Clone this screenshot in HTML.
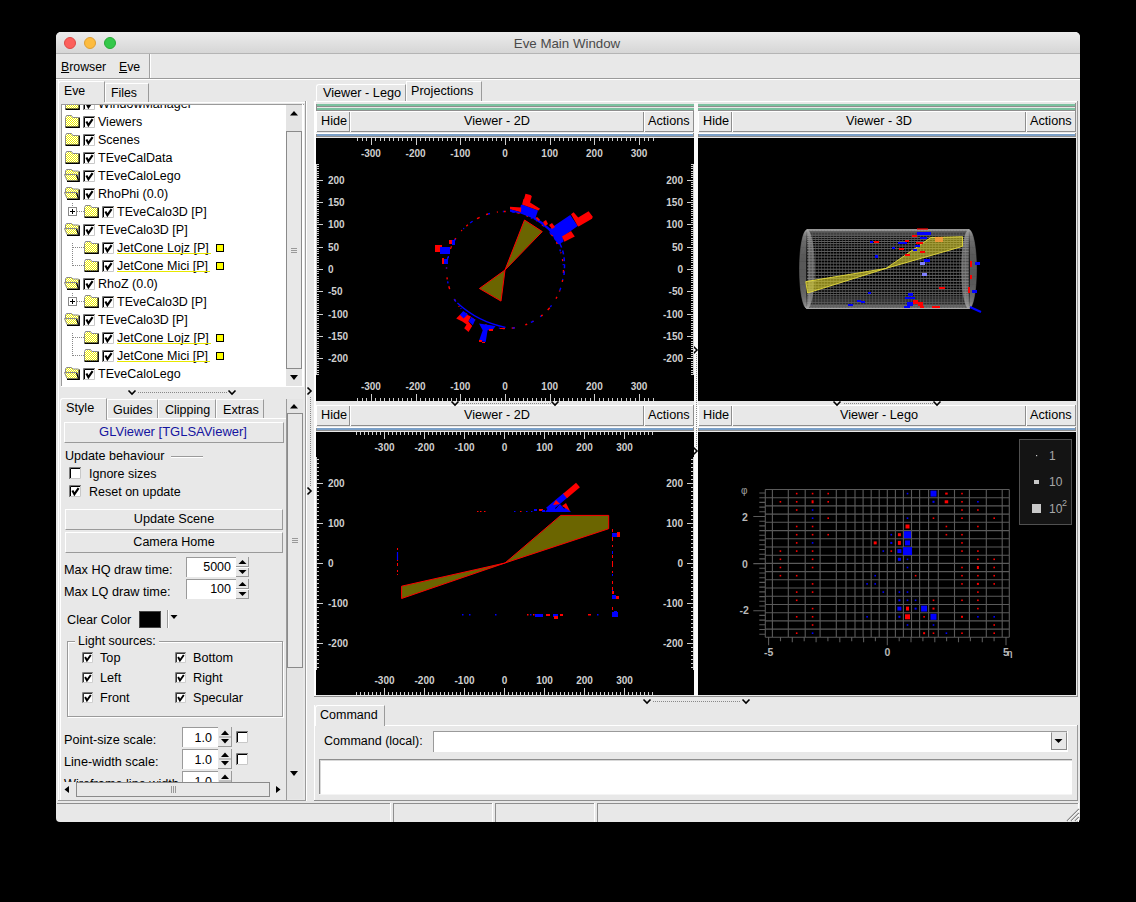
<!DOCTYPE html><html><head><meta charset="utf-8"><style>
html,body{margin:0;padding:0;background:#000;width:1136px;height:902px;overflow:hidden}
.a{position:absolute}
.t{font-family:"Liberation Sans",sans-serif;white-space:pre}
svg{position:absolute}
</style></head><body>
<div class="a" style="left:56px;top:32px;width:1024px;height:790px;background:#e8e8e8;border-radius:5px 5px 4px 4px"></div>
<div class="a" style="left:56px;top:32px;width:1024px;height:21px;background:linear-gradient(#ececec,#d6d6d6);border-radius:5px 5px 0 0"></div>
<div class="a" style="left:56px;top:53px;width:1024px;height:1px;background:#b4b4b4"></div>
<div class="a" style="left:64px;top:37px;width:12px;height:12px;background:#fc605c;border-radius:50%;box-sizing:border-box;border:0.5px solid #de4a46"></div>
<div class="a" style="left:84px;top:37px;width:12px;height:12px;background:#fdbc40;border-radius:50%;box-sizing:border-box;border:0.5px solid #de9f34"></div>
<div class="a" style="left:104px;top:37px;width:12px;height:12px;background:#34c84a;border-radius:50%;box-sizing:border-box;border:0.5px solid #27aa35"></div>
<div class="a t" style="left:367px;width:400px;text-align:center;top:36px;font-size:13.3px;line-height:16px;color:#4a4a4a;">Eve Main Window</div>
<div class="a t" style="left:61px;top:60px;font-size:12.3px;line-height:15px;color:#000;"><u>B</u>rowser</div>
<div class="a t" style="left:119px;top:60px;font-size:12.3px;line-height:15px;color:#000;"><u>E</u>ve</div>
<div class="a" style="left:149px;top:54px;width:1px;height:24px;background:#a0a0a0"></div>
<div class="a" style="left:150px;top:54px;width:1px;height:24px;background:#ffffff"></div>
<div class="a" style="left:56px;top:78px;width:1024px;height:1px;background:#9a9a9a"></div>
<div class="a" style="left:56px;top:79px;width:1024px;height:1px;background:#ffffff"></div>
<div class="a" style="left:58px;top:80px;width:1px;height:721px;background:#ffffff"></div>
<div class="a" style="left:305px;top:101px;width:1px;height:700px;background:#9a9a9a"></div>
<div class="a" style="left:306px;top:101px;width:1px;height:700px;background:#ffffff"></div>
<div class="a" style="left:58px;top:800px;width:248px;height:1px;background:#9a9a9a"></div>
<div class="a" style="left:58px;top:81px;width:47px;height:21px;background:#e8e8e8;border-top:1px solid #ffffff;border-left:1px solid #ffffff;border-right:1px solid #9a9a9a;box-sizing:border-box;border-radius:3px 0 0 0"></div>
<div class="a" style="left:105px;top:83px;width:44px;height:19px;background:#e8e8e8;border-top:1px solid #ffffff;border-left:1px solid #ffffff;border-right:1px solid #9a9a9a;box-sizing:border-box"></div>
<div class="a t" style="left:64px;top:84px;font-size:12.3px;line-height:15px;color:#000;">Eve</div>
<div class="a t" style="left:111px;top:86px;font-size:12.3px;line-height:15px;color:#000;">Files</div>
<div class="a" style="left:105px;top:102px;width:200px;height:1px;background:#ffffff"></div>
<div class="a" style="left:61px;top:104px;width:243px;height:283px;background:#fff;border-top:1px solid #9a9a9a;border-left:1px solid #9a9a9a;box-sizing:border-box"></div>
<svg width="0" height="0" style="position:absolute"><defs>
<pattern id="chk" width="2" height="2" patternUnits="userSpaceOnUse"><rect width="2" height="2" fill="#fff"/><rect width="1" height="1" fill="#f0f000"/><rect x="1" y="1" width="1" height="1" fill="#f0f000"/></pattern>
<symbol id="fc" viewBox="0 0 16 13"><path d="M1 12 V2.5 L2 0.5 H6.5 L8 2.5 H14 V12 Z" fill="url(#chk)"/><path d="M0.5 12 V2.5 L1.5 0.5 H6.5 L7.8 2.5 H13.5" stroke="#8a8a8a" fill="none"/><path d="M14.2 2.5 V12.2 H0.5" stroke="#000" stroke-width="1.4" fill="none"/></symbol>
<symbol id="fo" viewBox="0 0 16 13"><path d="M2 6 V2 L3 0.5 H7.5 L9 2 H14.5 V6 Z" fill="url(#chk)"/><path d="M1.5 6 V2 L2.5 0.5 H7.5 L9 2 H14.5" stroke="#8a8a8a" fill="none"/><path d="M0.5 6 H12.5 L14.5 11.5 H3 Z" fill="url(#chk)"/><path d="M0.5 5.5 H12.5" stroke="#8a8a8a" stroke-width="1.2"/><path d="M0.5 5.5 L3 11.5" stroke="#8a8a8a"/><path d="M12.5 5.8 L14.5 11.5" stroke="#000" stroke-width="1.3"/><path d="M15.2 2.5 V12.2 H3" stroke="#000" stroke-width="1.4" fill="none"/></symbol>
<symbol id="cb" viewBox="0 0 12 12"><rect x="0" y="0" width="12" height="12" fill="#fff"/><path d="M0.5 12 V0.5 H12" stroke="#7a7a7a" fill="none"/><path d="M1.5 11 V1.5 H11" stroke="#000" fill="none"/><path d="M11.5 1 V11.5 H1" stroke="#c8c8c8" fill="none"/><path d="M3.4 5.4 L5.4 9.2 L9.6 3.2" stroke="#000" stroke-width="2.1" fill="none"/></symbol>
<symbol id="cbe" viewBox="0 0 12 12"><rect x="0" y="0" width="12" height="12" fill="#fff"/><path d="M0.5 12 V0.5 H12" stroke="#7a7a7a" fill="none"/><path d="M1.5 11 V1.5 H11" stroke="#000" fill="none"/><path d="M11.5 1 V11.5 H1" stroke="#c8c8c8" fill="none"/></symbol>
</defs></svg>
<div class="a" style="left:62px;top:105px;width:224px;height:281px;overflow:hidden">
<svg class="a" style="left:3px;top:-8px" width="16" height="13"><use href="#fc" width="16" height="13"/></svg>
<svg class="a" style="left:21px;top:-7px" width="12" height="12"><use href="#cb" width="12" height="12"/></svg>
<div class="a t" style="left:36px;top:-8px;font-size:12.5px;line-height:15px">WindowManager</div>
<svg class="a" style="left:3px;top:10px" width="16" height="13"><use href="#fc" width="16" height="13"/></svg>
<svg class="a" style="left:21px;top:11px" width="12" height="12"><use href="#cb" width="12" height="12"/></svg>
<div class="a t" style="left:36px;top:10px;font-size:12.5px;line-height:15px">Viewers</div>
<svg class="a" style="left:3px;top:28px" width="16" height="13"><use href="#fc" width="16" height="13"/></svg>
<svg class="a" style="left:21px;top:29px" width="12" height="12"><use href="#cb" width="12" height="12"/></svg>
<div class="a t" style="left:36px;top:28px;font-size:12.5px;line-height:15px">Scenes</div>
<svg class="a" style="left:3px;top:46px" width="16" height="13"><use href="#fc" width="16" height="13"/></svg>
<svg class="a" style="left:21px;top:47px" width="12" height="12"><use href="#cb" width="12" height="12"/></svg>
<div class="a t" style="left:36px;top:46px;font-size:12.5px;line-height:15px">TEveCalData</div>
<svg class="a" style="left:2px;top:64px" width="16" height="13"><use href="#fo" width="16" height="13"/></svg>
<svg class="a" style="left:21px;top:65px" width="12" height="12"><use href="#cb" width="12" height="12"/></svg>
<div class="a t" style="left:36px;top:64px;font-size:12.5px;line-height:15px">TEveCaloLego</div>
<svg class="a" style="left:2px;top:82px" width="16" height="13"><use href="#fo" width="16" height="13"/></svg>
<svg class="a" style="left:21px;top:83px" width="12" height="12"><use href="#cb" width="12" height="12"/></svg>
<div class="a t" style="left:36px;top:82px;font-size:12.5px;line-height:15px">RhoPhi (0.0)</div>
<svg class="a" style="left:22px;top:100px" width="16" height="13"><use href="#fc" width="16" height="13"/></svg>
<svg class="a" style="left:40px;top:101px" width="12" height="12"><use href="#cb" width="12" height="12"/></svg>
<div class="a t" style="left:55px;top:100px;font-size:12.5px;line-height:15px">TEveCalo3D [P]</div>
<div class="a" style="left:6px;top:102px;width:9px;height:9px;box-sizing:border-box;border:1px solid #888;background:#fff"></div>
<div class="a" style="left:8px;top:106px;width:5px;height:1px;background:#000"></div>
<div class="a" style="left:10px;top:104px;width:1px;height:5px;background:#000"></div>
<div class="a" style="left:15px;top:106px;width:7px;height:1px;background-image:linear-gradient(90deg,#888 50%,transparent 50%);background-size:2px 1px"></div>
<div class="a" style="left:10px;top:98px;width:1px;height:4px;background-image:linear-gradient(#888 50%,transparent 50%);background-size:1px 2px"></div>
<svg class="a" style="left:2px;top:118px" width="16" height="13"><use href="#fo" width="16" height="13"/></svg>
<svg class="a" style="left:21px;top:119px" width="12" height="12"><use href="#cb" width="12" height="12"/></svg>
<div class="a t" style="left:36px;top:118px;font-size:12.5px;line-height:15px">TEveCalo3D [P]</div>
<svg class="a" style="left:22px;top:136px" width="16" height="13"><use href="#fc" width="16" height="13"/></svg>
<svg class="a" style="left:40px;top:137px" width="12" height="12"><use href="#cb" width="12" height="12"/></svg>
<div class="a t" style="left:55px;top:136px;font-size:12.5px;line-height:15px">JetCone Lojz [P]</div>
<div class="a" style="left:55px;top:148px;width:94px;height:1px;background:#e8e800"></div>
<div class="a" style="left:154px;top:139px;width:8px;height:8px;box-sizing:border-box;border:1px solid #000;background:#ffff00"></div>
<div class="a" style="left:11px;top:142px;width:11px;height:1px;background-image:linear-gradient(90deg,#888 50%,transparent 50%);background-size:2px 1px"></div>
<div class="a" style="left:10px;top:138px;width:1px;height:23px;background-image:linear-gradient(#888 50%,transparent 50%);background-size:1px 2px"></div>
<svg class="a" style="left:22px;top:154px" width="16" height="13"><use href="#fc" width="16" height="13"/></svg>
<svg class="a" style="left:40px;top:155px" width="12" height="12"><use href="#cb" width="12" height="12"/></svg>
<div class="a t" style="left:55px;top:154px;font-size:12.5px;line-height:15px">JetCone Mici [P]</div>
<div class="a" style="left:55px;top:166px;width:93px;height:1px;background:#e8e800"></div>
<div class="a" style="left:154px;top:157px;width:8px;height:8px;box-sizing:border-box;border:1px solid #000;background:#ffff00"></div>
<div class="a" style="left:11px;top:160px;width:11px;height:1px;background-image:linear-gradient(90deg,#888 50%,transparent 50%);background-size:2px 1px"></div>
<svg class="a" style="left:2px;top:172px" width="16" height="13"><use href="#fo" width="16" height="13"/></svg>
<svg class="a" style="left:21px;top:173px" width="12" height="12"><use href="#cb" width="12" height="12"/></svg>
<div class="a t" style="left:36px;top:172px;font-size:12.5px;line-height:15px">RhoZ (0.0)</div>
<svg class="a" style="left:22px;top:190px" width="16" height="13"><use href="#fc" width="16" height="13"/></svg>
<svg class="a" style="left:40px;top:191px" width="12" height="12"><use href="#cb" width="12" height="12"/></svg>
<div class="a t" style="left:55px;top:190px;font-size:12.5px;line-height:15px">TEveCalo3D [P]</div>
<div class="a" style="left:6px;top:192px;width:9px;height:9px;box-sizing:border-box;border:1px solid #888;background:#fff"></div>
<div class="a" style="left:8px;top:196px;width:5px;height:1px;background:#000"></div>
<div class="a" style="left:10px;top:194px;width:1px;height:5px;background:#000"></div>
<div class="a" style="left:15px;top:196px;width:7px;height:1px;background-image:linear-gradient(90deg,#888 50%,transparent 50%);background-size:2px 1px"></div>
<div class="a" style="left:10px;top:188px;width:1px;height:4px;background-image:linear-gradient(#888 50%,transparent 50%);background-size:1px 2px"></div>
<svg class="a" style="left:2px;top:208px" width="16" height="13"><use href="#fo" width="16" height="13"/></svg>
<svg class="a" style="left:21px;top:209px" width="12" height="12"><use href="#cb" width="12" height="12"/></svg>
<div class="a t" style="left:36px;top:208px;font-size:12.5px;line-height:15px">TEveCalo3D [P]</div>
<svg class="a" style="left:22px;top:226px" width="16" height="13"><use href="#fc" width="16" height="13"/></svg>
<svg class="a" style="left:40px;top:227px" width="12" height="12"><use href="#cb" width="12" height="12"/></svg>
<div class="a t" style="left:55px;top:226px;font-size:12.5px;line-height:15px">JetCone Lojz [P]</div>
<div class="a" style="left:55px;top:238px;width:94px;height:1px;background:#e8e800"></div>
<div class="a" style="left:154px;top:229px;width:8px;height:8px;box-sizing:border-box;border:1px solid #000;background:#ffff00"></div>
<div class="a" style="left:11px;top:232px;width:11px;height:1px;background-image:linear-gradient(90deg,#888 50%,transparent 50%);background-size:2px 1px"></div>
<div class="a" style="left:10px;top:228px;width:1px;height:23px;background-image:linear-gradient(#888 50%,transparent 50%);background-size:1px 2px"></div>
<svg class="a" style="left:22px;top:244px" width="16" height="13"><use href="#fc" width="16" height="13"/></svg>
<svg class="a" style="left:40px;top:245px" width="12" height="12"><use href="#cb" width="12" height="12"/></svg>
<div class="a t" style="left:55px;top:244px;font-size:12.5px;line-height:15px">JetCone Mici [P]</div>
<div class="a" style="left:55px;top:256px;width:93px;height:1px;background:#e8e800"></div>
<div class="a" style="left:154px;top:247px;width:8px;height:8px;box-sizing:border-box;border:1px solid #000;background:#ffff00"></div>
<div class="a" style="left:11px;top:250px;width:11px;height:1px;background-image:linear-gradient(90deg,#888 50%,transparent 50%);background-size:2px 1px"></div>
<svg class="a" style="left:2px;top:262px" width="16" height="13"><use href="#fo" width="16" height="13"/></svg>
<svg class="a" style="left:21px;top:263px" width="12" height="12"><use href="#cb" width="12" height="12"/></svg>
<div class="a t" style="left:36px;top:262px;font-size:12.5px;line-height:15px">TEveCaloLego</div>
</div>
<div class="a" style="left:286px;top:105px;width:16px;height:281px;background:#e4e4e4"></div>
<svg class="a" style="left:286px;top:105px" width="16" height="281"><path d="M4 10.5 L12 10.5 L8 6 Z" fill="#000"/><path d="M4 270 L12 270 L8 275 Z" fill="#000"/><rect x="0.5" y="26.5" width="15" height="237" fill="#e8e8e8" stroke="#8a8a8a"/><path d="M5 143.5 H11 M5 145.5 H11 M5 147.5 H11" stroke="#999"/></svg>
<div class="a" style="left:302px;top:104px;width:1px;height:283px;background:#fff"></div>
<div class="a" style="left:61px;top:386px;width:242px;height:1px;background:#fff"></div>
<svg class="a" style="left:127px;top:389px" width="10" height="8"><path d="M1.5 1.5 L5 5 L8.5 1.5" stroke="#000" stroke-width="1.6" fill="none"/></svg>
<svg class="a" style="left:227px;top:389px" width="10" height="8"><path d="M1.5 1.5 L5 5 L8.5 1.5" stroke="#000" stroke-width="1.6" fill="none"/></svg>
<div class="a" style="left:138px;top:392px;width:89px;height:1px;background-image:linear-gradient(90deg,#888 50%,transparent 50%);background-size:2px 1px"></div>
<svg class="a" style="left:306px;top:386px" width="8" height="10"><path d="M1.5 1.5 L5 5 L1.5 8.5" stroke="#000" stroke-width="1.6" fill="none"/></svg>
<svg class="a" style="left:306px;top:486px" width="8" height="10"><path d="M1.5 1.5 L5 5 L1.5 8.5" stroke="#000" stroke-width="1.6" fill="none"/></svg>
<div class="a" style="left:310px;top:397px;width:1px;height:90px;background-image:linear-gradient(#888 50%,transparent 50%);background-size:1px 2px"></div>
<div class="a" style="left:60px;top:399px;width:226px;height:20px;background:#e8e8e8"></div>
<div class="a" style="left:107px;top:399px;width:51px;height:20px;background:#e8e8e8;border-top:1px solid #ffffff;border-left:1px solid #ffffff;border-right:1px solid #9a9a9a;box-sizing:border-box"></div>
<div class="a" style="left:158px;top:399px;width:58px;height:20px;background:#e8e8e8;border-top:1px solid #ffffff;border-left:1px solid #ffffff;border-right:1px solid #9a9a9a;box-sizing:border-box"></div>
<div class="a" style="left:216px;top:399px;width:48px;height:20px;background:#e8e8e8;border-top:1px solid #ffffff;border-left:1px solid #ffffff;border-right:1px solid #9a9a9a;box-sizing:border-box"></div>
<div class="a" style="left:107px;top:418px;width:179px;height:1px;background:#ffffff"></div>
<div class="a" style="left:60px;top:398px;width:47px;height:22px;background:#e8e8e8;border-top:1px solid #ffffff;border-left:1px solid #ffffff;border-right:1px solid #9a9a9a;box-sizing:border-box;border-radius:3px 0 0 0"></div>
<div class="a t" style="left:66px;top:401px;font-size:12.7px;line-height:15px;color:#000;">Style</div>
<div class="a t" style="left:113px;top:403px;font-size:12.5px;line-height:15px;color:#000;">Guides</div>
<div class="a t" style="left:165px;top:403px;font-size:12.5px;line-height:15px;color:#000;">Clipping</div>
<div class="a t" style="left:223px;top:403px;font-size:12.7px;line-height:15px;color:#000;">Extras</div>
<div class="a" style="left:60px;top:418px;width:1px;height:382px;background:#ffffff"></div>
<div class="a" style="left:287px;top:399px;width:16px;height:400px;background:#e4e4e4"></div>
<svg class="a" style="left:286px;top:399px" width="18" height="400"><path d="M4 9.5 L12 9.5 L8 5 Z" fill="#000"/><path d="M4 372 L12 372 L8 377 Z" fill="#000"/><rect x="1.5" y="14.5" width="15" height="254" fill="#e8e8e8" stroke="#8a8a8a"/><path d="M6 139.5 H12 M6 141.5 H12 M6 143.5 H12" stroke="#999"/></svg>
<div class="a" style="left:286px;top:399px;width:1px;height:401px;background:#9a9a9a"></div>
<div class="a" style="left:64px;top:422px;width:220px;height:21px;background:#e8e8e8;border-top:1px solid #ffffff;border-left:1px solid #ffffff;border-bottom:1px solid #9a9a9a;border-right:1px solid #9a9a9a;box-sizing:border-box"></div>
<div class="a t" style="left:-27px;width:400px;text-align:center;top:424px;font-size:13px;line-height:16px;color:#1414a0;">GLViewer [TGLSAViewer]</div>
<div class="a t" style="left:65px;top:449px;font-size:12.6px;line-height:15px;color:#000;">Update behaviour</div>
<div class="a" style="left:171px;top:456px;width:32px;height:1px;background:#9a9a9a"></div>
<div class="a" style="left:171px;top:457px;width:32px;height:1px;background:#ffffff"></div>
<svg class="a" style="left:69px;top:467px" width="12" height="12" viewBox="0 0 12 12"><use href="#cbe" width="12" height="12"/></svg>
<div class="a t" style="left:89px;top:467px;font-size:12.5px;line-height:15px;color:#000;">Ignore sizes</div>
<svg class="a" style="left:69px;top:485px" width="12" height="12" viewBox="0 0 12 12"><use href="#cb" width="12" height="12"/></svg>
<div class="a t" style="left:89px;top:485px;font-size:12.5px;line-height:15px;color:#000;">Reset on update</div>
<div class="a" style="left:65px;top:509px;width:218px;height:21px;background:#e8e8e8;border-top:1px solid #ffffff;border-left:1px solid #ffffff;border-bottom:1px solid #9a9a9a;border-right:1px solid #9a9a9a;box-sizing:border-box"></div>
<div class="a t" style="left:-26px;width:400px;text-align:center;top:512px;font-size:12.7px;line-height:15px;color:#000;">Update Scene</div>
<div class="a" style="left:65px;top:532px;width:218px;height:21px;background:#e8e8e8;border-top:1px solid #ffffff;border-left:1px solid #ffffff;border-bottom:1px solid #9a9a9a;border-right:1px solid #9a9a9a;box-sizing:border-box"></div>
<div class="a t" style="left:-26px;width:400px;text-align:center;top:535px;font-size:12.5px;line-height:15px;color:#000;">Camera Home</div>
<div class="a t" style="left:64px;top:563px;font-size:12.7px;line-height:15px;color:#000;">Max HQ draw time:</div>
<div class="a" style="left:186px;top:557px;width:50px;height:20px;background:#fff;border-top:1px solid #9a9a9a;border-left:1px solid #9a9a9a;box-sizing:border-box"></div>
<div class="a t" style="left:-169px;width:400px;text-align:right;top:560px;font-size:12.5px;line-height:15px;color:#000;">5000</div>
<div class="a" style="left:236px;top:557px;width:13px;height:20px;background:#e8e8e8;border-right:1px solid #9a9a9a;border-bottom:1px solid #9a9a9a;box-sizing:border-box"></div>
<svg class="a" style="left:236px;top:557px" width="13" height="20"><path d="M2.5 7 L10.5 7 L6.5 3 Z" fill="#000"/><path d="M2.5 13 L10.5 13 L6.5 17 Z" fill="#000"/><path d="M0 9.5 H13" stroke="#9a9a9a"/><path d="M0 10.5 H13" stroke="#fff"/></svg>
<div class="a t" style="left:64px;top:585px;font-size:12.7px;line-height:15px;color:#000;">Max LQ draw time:</div>
<div class="a" style="left:186px;top:579px;width:50px;height:20px;background:#fff;border-top:1px solid #9a9a9a;border-left:1px solid #9a9a9a;box-sizing:border-box"></div>
<div class="a t" style="left:-169px;width:400px;text-align:right;top:582px;font-size:12.5px;line-height:15px;color:#000;">100</div>
<div class="a" style="left:236px;top:579px;width:13px;height:20px;background:#e8e8e8;border-right:1px solid #9a9a9a;border-bottom:1px solid #9a9a9a;box-sizing:border-box"></div>
<svg class="a" style="left:236px;top:579px" width="13" height="20"><path d="M2.5 7 L10.5 7 L6.5 3 Z" fill="#000"/><path d="M2.5 13 L10.5 13 L6.5 17 Z" fill="#000"/><path d="M0 9.5 H13" stroke="#9a9a9a"/><path d="M0 10.5 H13" stroke="#fff"/></svg>
<div class="a t" style="left:67px;top:613px;font-size:12.7px;line-height:15px;color:#000;">Clear Color</div>
<div class="a" style="left:139px;top:611px;width:22px;height:17px;background:#000;border:1px solid #444;box-sizing:border-box"></div>
<div class="a" style="left:167px;top:610px;width:1px;height:18px;background:#9a9a9a"></div>
<div class="a" style="left:168px;top:610px;width:1px;height:18px;background:#ffffff"></div>
<svg class="a" style="left:170px;top:614px" width="8" height="6"><path d="M0.5 1 L7.5 1 L4 5 Z" fill="#000"/></svg>
<div class="a" style="left:67px;top:641px;width:216px;height:76px;border:1px solid #9a9a9a;box-shadow:inset 1px 1px 0 #fff, 1px 1px 0 #fff;box-sizing:border-box"></div>
<div class="a" style="left:75px;top:636px;width:84px;height:12px;background:#e8e8e8"></div>
<div class="a t" style="left:78px;top:634px;font-size:12.5px;line-height:15px;color:#000;">Light sources:</div>
<svg class="a" style="left:82px;top:652px" width="11" height="11" viewBox="0 0 11 11"><use href="#cb" width="11" height="11"/></svg>
<svg class="a" style="left:175px;top:652px" width="11" height="11" viewBox="0 0 11 11"><use href="#cb" width="11" height="11"/></svg>
<div class="a t" style="left:100px;top:651px;font-size:12.7px;line-height:15px;color:#000;">Top</div>
<div class="a t" style="left:193px;top:651px;font-size:12.7px;line-height:15px;color:#000;">Bottom</div>
<svg class="a" style="left:82px;top:672px" width="11" height="11" viewBox="0 0 11 11"><use href="#cb" width="11" height="11"/></svg>
<svg class="a" style="left:175px;top:672px" width="11" height="11" viewBox="0 0 11 11"><use href="#cb" width="11" height="11"/></svg>
<div class="a t" style="left:100px;top:671px;font-size:12.7px;line-height:15px;color:#000;">Left</div>
<div class="a t" style="left:193px;top:671px;font-size:12.7px;line-height:15px;color:#000;">Right</div>
<svg class="a" style="left:82px;top:692px" width="11" height="11" viewBox="0 0 11 11"><use href="#cb" width="11" height="11"/></svg>
<svg class="a" style="left:175px;top:692px" width="11" height="11" viewBox="0 0 11 11"><use href="#cb" width="11" height="11"/></svg>
<div class="a t" style="left:100px;top:691px;font-size:12.7px;line-height:15px;color:#000;">Front</div>
<div class="a t" style="left:193px;top:691px;font-size:12.7px;line-height:15px;color:#000;">Specular</div>
<div class="a t" style="left:64px;top:733px;font-size:12.7px;line-height:15px;color:#000;">Point-size scale:</div>
<div class="a" style="left:182px;top:727px;width:36px;height:20px;background:#fff;border-top:1px solid #9a9a9a;border-left:1px solid #9a9a9a;box-sizing:border-box"></div>
<div class="a t" style="left:-188px;width:400px;text-align:right;top:731px;font-size:12.5px;line-height:15px;color:#000;">1.0</div>
<div class="a" style="left:218px;top:727px;width:14px;height:20px;background:#e8e8e8;border-right:1px solid #9a9a9a;border-bottom:1px solid #9a9a9a;box-sizing:border-box"></div>
<svg class="a" style="left:218px;top:727px" width="14" height="20"><path d="M3 8 L11 8 L7 3.5 Z" fill="#000"/><path d="M3 12 L11 12 L7 16.5 Z" fill="#000"/><path d="M1 10 H13" stroke="#9a9a9a"/></svg>
<svg class="a" style="left:236px;top:731px" width="12" height="12" viewBox="0 0 12 12"><use href="#cbe" width="12" height="12"/></svg>
<div class="a t" style="left:64px;top:755px;font-size:12.7px;line-height:15px;color:#000;">Line-width scale:</div>
<div class="a" style="left:182px;top:749px;width:36px;height:20px;background:#fff;border-top:1px solid #9a9a9a;border-left:1px solid #9a9a9a;box-sizing:border-box"></div>
<div class="a t" style="left:-188px;width:400px;text-align:right;top:753px;font-size:12.5px;line-height:15px;color:#000;">1.0</div>
<div class="a" style="left:218px;top:749px;width:14px;height:20px;background:#e8e8e8;border-right:1px solid #9a9a9a;border-bottom:1px solid #9a9a9a;box-sizing:border-box"></div>
<svg class="a" style="left:218px;top:749px" width="14" height="20"><path d="M3 8 L11 8 L7 3.5 Z" fill="#000"/><path d="M3 12 L11 12 L7 16.5 Z" fill="#000"/><path d="M1 10 H13" stroke="#9a9a9a"/></svg>
<svg class="a" style="left:236px;top:753px" width="12" height="12" viewBox="0 0 12 12"><use href="#cbe" width="12" height="12"/></svg>
<div class="a t" style="left:64px;top:777px;font-size:12.7px;line-height:15px;color:#000;">Wireframe line width</div>
<div class="a" style="left:182px;top:771px;width:36px;height:20px;background:#fff;border-top:1px solid #9a9a9a;border-left:1px solid #9a9a9a;box-sizing:border-box"></div>
<div class="a t" style="left:-188px;width:400px;text-align:right;top:775px;font-size:12.5px;line-height:15px;color:#000;">1.0</div>
<div class="a" style="left:218px;top:771px;width:14px;height:20px;background:#e8e8e8;border-right:1px solid #9a9a9a;border-bottom:1px solid #9a9a9a;box-sizing:border-box"></div>
<svg class="a" style="left:218px;top:771px" width="14" height="20"><path d="M3 8 L11 8 L7 3.5 Z" fill="#000"/><path d="M3 12 L11 12 L7 16.5 Z" fill="#000"/><path d="M1 10 H13" stroke="#9a9a9a"/></svg>
<div class="a" style="left:61px;top:782px;width:225px;height:18px;background:#e8e8e8"></div>
<div class="a" style="left:76px;top:782px;width:194px;height:15px;background:#e8e8e8;border:1px solid #8a8a8a;box-sizing:border-box"></div>
<svg class="a" style="left:61px;top:782px" width="225" height="18"><path d="M8 4 L8 11 L3.5 7.5 Z" fill="#000"/><path d="M215 4 L215 11 L219.5 7.5 Z" fill="#000"/><path d="M110.5 4 V11 M112.5 4 V11 M114.5 4 V11" stroke="#999"/></svg>
<div class="a" style="left:316px;top:84px;width:90px;height:18px;background:#e8e8e8;border-top:1px solid #ffffff;border-left:1px solid #ffffff;border-right:1px solid #9a9a9a;box-sizing:border-box;border-radius:3px 0 0 0"></div>
<div class="a" style="left:406px;top:81px;width:76px;height:21px;background:#e8e8e8;border-top:1px solid #ffffff;border-left:1px solid #ffffff;border-right:1px solid #9a9a9a;box-sizing:border-box"></div>
<div class="a t" style="left:323px;top:86px;font-size:12.7px;line-height:15px;color:#000;">Viewer - Lego</div>
<div class="a t" style="left:411px;top:84px;font-size:12.6px;line-height:15px;color:#000;">Projections</div>
<div class="a" style="left:314px;top:101px;width:764px;height:1px;background:#ffffff"></div>
<div class="a" style="left:314px;top:101px;width:1px;height:596px;background:#ffffff"></div>
<div class="a" style="left:315px;top:101px;width:1px;height:596px;background:#ffffff"></div>
<div class="a" style="left:1077px;top:101px;width:1px;height:596px;background:#9a9a9a"></div>
<div class="a" style="left:1077px;top:725px;width:1px;height:76px;background:#9a9a9a"></div>
<div class="a" style="left:317px;top:104px;width:759px;height:1px;background:#7cc2a0"></div>
<div class="a" style="left:317px;top:105px;width:759px;height:1px;background:#7cc2a0"></div>
<div class="a" style="left:316px;top:106px;width:760px;height:1px;background:#8e8e8e"></div>
<div class="a" style="left:317px;top:108px;width:759px;height:1px;background:#7cc2a0"></div>
<div class="a" style="left:317px;top:109px;width:759px;height:1px;background:#7cc2a0"></div>
<div class="a" style="left:316px;top:110px;width:760px;height:1px;background:#8e8e8e"></div>
<div class="a" style="left:316px;top:104px;width:1px;height:7px;background:#8e8e8e"></div>
<div class="a" style="left:1075px;top:103px;width:1px;height:7px;background:#8e8e8e"></div>
<div class="a" style="left:316px;top:111px;width:378px;height:21px;background:#e8e8e8;border-top:1px solid #ffffff;border-bottom:1px solid #8e8e8e;box-sizing:border-box"></div>
<div class="a" style="left:316px;top:111px;width:1px;height:21px;background:#ffffff"></div>
<div class="a" style="left:693px;top:111px;width:1px;height:21px;background:#8e8e8e"></div>
<div class="a" style="left:349px;top:112px;width:1px;height:20px;background:#8e8e8e"></div>
<div class="a" style="left:350px;top:112px;width:1px;height:20px;background:#ffffff"></div>
<div class="a" style="left:643px;top:112px;width:1px;height:20px;background:#8e8e8e"></div>
<div class="a" style="left:644px;top:112px;width:1px;height:20px;background:#ffffff"></div>
<div class="a t" style="left:321px;top:114px;font-size:12.7px;line-height:15px;color:#000;">Hide</div>
<div class="a t" style="left:297px;width:400px;text-align:center;top:114px;font-size:12.7px;line-height:15px;color:#000;">Viewer - 2D</div>
<div class="a t" style="left:648px;top:114px;font-size:12.7px;line-height:15px;color:#000;">Actions</div>
<div class="a" style="left:316px;top:133px;width:378px;height:1px;background:#ffffff"></div>
<div class="a" style="left:317px;top:134px;width:377px;height:1px;background:#7ba0c8"></div>
<div class="a" style="left:317px;top:135px;width:377px;height:1px;background:#7ba0c8"></div>
<div class="a" style="left:316px;top:136px;width:378px;height:1px;background:#8e8e8e"></div>
<div class="a" style="left:316px;top:134px;width:1px;height:3px;background:#8e8e8e"></div>
<div class="a" style="left:693px;top:133px;width:1px;height:4px;background:#8e8e8e"></div>
<div class="a" style="left:698px;top:111px;width:378px;height:21px;background:#e8e8e8;border-top:1px solid #ffffff;border-bottom:1px solid #8e8e8e;box-sizing:border-box"></div>
<div class="a" style="left:698px;top:111px;width:1px;height:21px;background:#ffffff"></div>
<div class="a" style="left:1075px;top:111px;width:1px;height:21px;background:#8e8e8e"></div>
<div class="a" style="left:731px;top:112px;width:1px;height:20px;background:#8e8e8e"></div>
<div class="a" style="left:732px;top:112px;width:1px;height:20px;background:#ffffff"></div>
<div class="a" style="left:1025px;top:112px;width:1px;height:20px;background:#8e8e8e"></div>
<div class="a" style="left:1026px;top:112px;width:1px;height:20px;background:#ffffff"></div>
<div class="a t" style="left:703px;top:114px;font-size:12.7px;line-height:15px;color:#000;">Hide</div>
<div class="a t" style="left:679px;width:400px;text-align:center;top:114px;font-size:12.7px;line-height:15px;color:#000;">Viewer - 3D</div>
<div class="a t" style="left:1030px;top:114px;font-size:12.7px;line-height:15px;color:#000;">Actions</div>
<div class="a" style="left:698px;top:133px;width:378px;height:1px;background:#ffffff"></div>
<div class="a" style="left:699px;top:134px;width:377px;height:1px;background:#7ba0c8"></div>
<div class="a" style="left:699px;top:135px;width:377px;height:1px;background:#7ba0c8"></div>
<div class="a" style="left:698px;top:136px;width:378px;height:1px;background:#8e8e8e"></div>
<div class="a" style="left:698px;top:134px;width:1px;height:3px;background:#8e8e8e"></div>
<div class="a" style="left:1075px;top:133px;width:1px;height:4px;background:#8e8e8e"></div>
<div class="a" style="left:316px;top:405px;width:378px;height:21px;background:#e8e8e8;border-top:1px solid #ffffff;border-bottom:1px solid #8e8e8e;box-sizing:border-box"></div>
<div class="a" style="left:316px;top:405px;width:1px;height:21px;background:#ffffff"></div>
<div class="a" style="left:693px;top:405px;width:1px;height:21px;background:#8e8e8e"></div>
<div class="a" style="left:349px;top:406px;width:1px;height:20px;background:#8e8e8e"></div>
<div class="a" style="left:350px;top:406px;width:1px;height:20px;background:#ffffff"></div>
<div class="a" style="left:643px;top:406px;width:1px;height:20px;background:#8e8e8e"></div>
<div class="a" style="left:644px;top:406px;width:1px;height:20px;background:#ffffff"></div>
<div class="a t" style="left:321px;top:408px;font-size:12.7px;line-height:15px;color:#000;">Hide</div>
<div class="a t" style="left:297px;width:400px;text-align:center;top:408px;font-size:12.7px;line-height:15px;color:#000;">Viewer - 2D</div>
<div class="a t" style="left:648px;top:408px;font-size:12.7px;line-height:15px;color:#000;">Actions</div>
<div class="a" style="left:316px;top:427px;width:378px;height:1px;background:#ffffff"></div>
<div class="a" style="left:317px;top:428px;width:377px;height:1px;background:#7ba0c8"></div>
<div class="a" style="left:317px;top:429px;width:377px;height:1px;background:#7ba0c8"></div>
<div class="a" style="left:316px;top:430px;width:378px;height:1px;background:#8e8e8e"></div>
<div class="a" style="left:316px;top:428px;width:1px;height:3px;background:#8e8e8e"></div>
<div class="a" style="left:693px;top:427px;width:1px;height:4px;background:#8e8e8e"></div>
<div class="a" style="left:698px;top:405px;width:378px;height:21px;background:#e8e8e8;border-top:1px solid #ffffff;border-bottom:1px solid #8e8e8e;box-sizing:border-box"></div>
<div class="a" style="left:698px;top:405px;width:1px;height:21px;background:#ffffff"></div>
<div class="a" style="left:1075px;top:405px;width:1px;height:21px;background:#8e8e8e"></div>
<div class="a" style="left:731px;top:406px;width:1px;height:20px;background:#8e8e8e"></div>
<div class="a" style="left:732px;top:406px;width:1px;height:20px;background:#ffffff"></div>
<div class="a" style="left:1025px;top:406px;width:1px;height:20px;background:#8e8e8e"></div>
<div class="a" style="left:1026px;top:406px;width:1px;height:20px;background:#ffffff"></div>
<div class="a t" style="left:703px;top:408px;font-size:12.7px;line-height:15px;color:#000;">Hide</div>
<div class="a t" style="left:679px;width:400px;text-align:center;top:408px;font-size:12.7px;line-height:15px;color:#000;">Viewer - Lego</div>
<div class="a t" style="left:1030px;top:408px;font-size:12.7px;line-height:15px;color:#000;">Actions</div>
<div class="a" style="left:698px;top:427px;width:378px;height:1px;background:#ffffff"></div>
<div class="a" style="left:699px;top:428px;width:377px;height:1px;background:#7ba0c8"></div>
<div class="a" style="left:699px;top:429px;width:377px;height:1px;background:#7ba0c8"></div>
<div class="a" style="left:698px;top:430px;width:378px;height:1px;background:#8e8e8e"></div>
<div class="a" style="left:698px;top:428px;width:1px;height:3px;background:#8e8e8e"></div>
<div class="a" style="left:1075px;top:427px;width:1px;height:4px;background:#8e8e8e"></div>
<div class="a" style="left:316px;top:138px;width:378px;height:263px;background:#000"></div>
<div class="a" style="left:698px;top:138px;width:378px;height:263px;background:#000"></div>
<div class="a" style="left:316px;top:432px;width:378px;height:263px;background:#000"></div>
<div class="a" style="left:698px;top:432px;width:378px;height:263px;background:#000"></div>
<div class="a" style="left:314px;top:696px;width:764px;height:1px;background:#8e8e8e"></div>
<div class="a" style="left:694px;top:103px;width:4px;height:593px;background:#fafafa"></div>
<div class="a" style="left:696px;top:354px;width:1px;height:94px;background-image:linear-gradient(#888 50%,transparent 50%);background-size:1px 2px"></div>
<svg class="a" style="left:692px;top:345px" width="8" height="10"><path d="M1.5 1.5 L5 5 L1.5 8.5" stroke="#000" stroke-width="1.6" fill="none"/></svg>
<svg class="a" style="left:692px;top:446px" width="8" height="10"><path d="M1.5 1.5 L5 5 L1.5 8.5" stroke="#000" stroke-width="1.6" fill="none"/></svg>
<svg class="a" style="left:450px;top:400px" width="10" height="8"><path d="M1.5 1.5 L5 5 L8.5 1.5" stroke="#000" stroke-width="1.6" fill="none"/></svg>
<svg class="a" style="left:550px;top:400px" width="10" height="8"><path d="M1.5 1.5 L5 5 L8.5 1.5" stroke="#000" stroke-width="1.6" fill="none"/></svg>
<div class="a" style="left:462px;top:403px;width:90px;height:1px;background-image:linear-gradient(90deg,#888 50%,transparent 50%);background-size:2px 1px"></div>
<svg class="a" style="left:832px;top:400px" width="10" height="8"><path d="M1.5 1.5 L5 5 L8.5 1.5" stroke="#000" stroke-width="1.6" fill="none"/></svg>
<svg class="a" style="left:932px;top:400px" width="10" height="8"><path d="M1.5 1.5 L5 5 L8.5 1.5" stroke="#000" stroke-width="1.6" fill="none"/></svg>
<div class="a" style="left:844px;top:403px;width:90px;height:1px;background-image:linear-gradient(90deg,#888 50%,transparent 50%);background-size:2px 1px"></div>
<svg class="a" style="left:642px;top:698px" width="10" height="8"><path d="M1.5 1.5 L5 5 L8.5 1.5" stroke="#000" stroke-width="1.6" fill="none"/></svg>
<svg class="a" style="left:741px;top:698px" width="10" height="8"><path d="M1.5 1.5 L5 5 L8.5 1.5" stroke="#000" stroke-width="1.6" fill="none"/></svg>
<div class="a" style="left:653px;top:701px;width:88px;height:1px;background-image:linear-gradient(90deg,#888 50%,transparent 50%);background-size:2px 1px"></div>
<div class="a" style="left:315px;top:705px;width:70px;height:21px;background:#e8e8e8;border-top:1px solid #ffffff;border-left:1px solid #ffffff;border-right:1px solid #9a9a9a;box-sizing:border-box;border-radius:3px 0 0 0"></div>
<div class="a t" style="left:320px;top:708px;font-size:12.5px;line-height:15px;color:#000;">Command</div>
<div class="a" style="left:385px;top:725px;width:692px;height:1px;background:#ffffff"></div>
<div class="a" style="left:314px;top:705px;width:1px;height:96px;background:#ffffff"></div>
<div class="a" style="left:314px;top:800px;width:764px;height:1px;background:#8e8e8e"></div>
<div class="a t" style="left:324px;top:734px;font-size:12.5px;line-height:15px;color:#000;">Command (local):</div>
<div class="a" style="left:433px;top:731px;width:635px;height:21px;background:#fff;border-top:1px solid #9a9a9a;border-left:1px solid #9a9a9a;box-sizing:border-box"></div>
<div class="a" style="left:1067px;top:731px;width:1px;height:21px;background:#ffffff"></div>
<div class="a" style="left:1051px;top:732px;width:16px;height:18px;background:#e8e8e8;border:1px solid #8a8a8a;border-top:1px solid #e8e8e8;border-left:1px solid #8a8a8a;box-sizing:border-box"></div>
<svg class="a" style="left:1051px;top:732px" width="16" height="18"><path d="M3.5 7 L11.5 7 L7.5 11 Z" fill="#000"/></svg>
<div class="a" style="left:319px;top:759px;width:753px;height:36px;background:#fff;border-top:1px solid #8e8e8e;border-left:1px solid #8e8e8e;box-shadow:inset 1px 1px 0 #d8d8d8;box-sizing:border-box"></div>
<div class="a" style="left:319px;top:794px;width:753px;height:1px;background:#f4f4f4"></div>
<div class="a" style="left:57px;top:803px;width:333px;height:1px;background:#8e8e8e"></div>
<div class="a" style="left:390px;top:803px;width:1px;height:19px;background:#ffffff"></div>
<div class="a" style="left:393px;top:803px;width:99px;height:1px;background:#8e8e8e"></div>
<div class="a" style="left:393px;top:803px;width:1px;height:19px;background:#8e8e8e"></div>
<div class="a" style="left:492px;top:803px;width:1px;height:19px;background:#ffffff"></div>
<div class="a" style="left:495px;top:803px;width:99px;height:1px;background:#8e8e8e"></div>
<div class="a" style="left:495px;top:803px;width:1px;height:19px;background:#8e8e8e"></div>
<div class="a" style="left:594px;top:803px;width:1px;height:19px;background:#ffffff"></div>
<div class="a" style="left:597px;top:803px;width:481px;height:1px;background:#8e8e8e"></div>
<div class="a" style="left:597px;top:803px;width:1px;height:19px;background:#8e8e8e"></div>
<div class="a" style="left:1078px;top:803px;width:1px;height:19px;background:#ffffff"></div>
<svg class="a" style="left:1064px;top:806px" width="16" height="16"><path d="M3 15 L15 3 M7 15 L15 7 M11 15 L15 11" stroke="#888" stroke-width="1.3"/><path d="M4 15 L15 4 M8 15 L15 8 M12 15 L15 12" stroke="#fff" stroke-width="0.8"/></svg>
<svg class="a" style="left:316px;top:138px" width="378" height="263"><path d="M41.5 0 V3 M41.5 263 V260 M46.5 0 V3 M46.5 263 V260 M50.5 0 V3 M50.5 263 V260 M55.5 0 V7 M55.5 263 V256 M59.5 0 V3 M59.5 263 V260 M64.5 0 V3 M64.5 263 V260 M68.5 0 V3 M68.5 263 V260 M73.5 0 V3 M73.5 263 V260 M77.5 0 V3 M77.5 263 V260 M82.5 0 V3 M82.5 263 V260 M86.5 0 V3 M86.5 263 V260 M91.5 0 V3 M91.5 263 V260 M95.5 0 V3 M95.5 263 V260 M100.5 0 V7 M100.5 263 V256 M104.5 0 V3 M104.5 263 V260 M109.5 0 V3 M109.5 263 V260 M113.5 0 V3 M113.5 263 V260 M117.5 0 V3 M117.5 263 V260 M122.5 0 V3 M122.5 263 V260 M126.5 0 V3 M126.5 263 V260 M131.5 0 V3 M131.5 263 V260 M135.5 0 V3 M135.5 263 V260 M140.5 0 V3 M140.5 263 V260 M144.5 0 V7 M144.5 263 V256 M149.5 0 V3 M149.5 263 V260 M153.5 0 V3 M153.5 263 V260 M158.5 0 V3 M158.5 263 V260 M162.5 0 V3 M162.5 263 V260 M167.5 0 V3 M167.5 263 V260 M171.5 0 V3 M171.5 263 V260 M176.5 0 V3 M176.5 263 V260 M180.5 0 V3 M180.5 263 V260 M185.5 0 V3 M185.5 263 V260 M189.5 0 V7 M189.5 263 V256 M193.5 0 V3 M193.5 263 V260 M198.5 0 V3 M198.5 263 V260 M202.5 0 V3 M202.5 263 V260 M207.5 0 V3 M207.5 263 V260 M211.5 0 V3 M211.5 263 V260 M216.5 0 V3 M216.5 263 V260 M220.5 0 V3 M220.5 263 V260 M225.5 0 V3 M225.5 263 V260 M229.5 0 V3 M229.5 263 V260 M234.5 0 V7 M234.5 263 V256 M238.5 0 V3 M238.5 263 V260 M243.5 0 V3 M243.5 263 V260 M247.5 0 V3 M247.5 263 V260 M252.5 0 V3 M252.5 263 V260 M256.5 0 V3 M256.5 263 V260 M261.5 0 V3 M261.5 263 V260 M265.5 0 V3 M265.5 263 V260 M269.5 0 V3 M269.5 263 V260 M274.5 0 V3 M274.5 263 V260 M278.5 0 V7 M278.5 263 V256 M283.5 0 V3 M283.5 263 V260 M287.5 0 V3 M287.5 263 V260 M292.5 0 V3 M292.5 263 V260 M296.5 0 V3 M296.5 263 V260 M301.5 0 V3 M301.5 263 V260 M305.5 0 V3 M305.5 263 V260 M310.5 0 V3 M310.5 263 V260 M314.5 0 V3 M314.5 263 V260 M319.5 0 V3 M319.5 263 V260 M323.5 0 V7 M323.5 263 V256 M328.5 0 V3 M328.5 263 V260 M332.5 0 V3 M332.5 263 V260 M337.5 0 V3 M337.5 263 V260 M0 236.5 H3 M378 236.5 H375 M0 234.5 H3 M378 234.5 H375 M0 232.5 H3 M378 232.5 H375 M0 229.5 H3 M378 229.5 H375 M0 227.5 H3 M378 227.5 H375 M0 225.5 H3 M378 225.5 H375 M0 223.5 H3 M378 223.5 H375 M0 220.5 H7 M378 220.5 H371 M0 218.5 H3 M378 218.5 H375 M0 216.5 H3 M378 216.5 H375 M0 214.5 H3 M378 214.5 H375 M0 211.5 H3 M378 211.5 H375 M0 209.5 H3 M378 209.5 H375 M0 207.5 H3 M378 207.5 H375 M0 205.5 H3 M378 205.5 H375 M0 203.5 H3 M378 203.5 H375 M0 200.5 H3 M378 200.5 H375 M0 198.5 H7 M378 198.5 H371 M0 196.5 H3 M378 196.5 H375 M0 194.5 H3 M378 194.5 H375 M0 191.5 H3 M378 191.5 H375 M0 189.5 H3 M378 189.5 H375 M0 187.5 H3 M378 187.5 H375 M0 185.5 H3 M378 185.5 H375 M0 182.5 H3 M378 182.5 H375 M0 180.5 H3 M378 180.5 H375 M0 178.5 H3 M378 178.5 H375 M0 176.5 H7 M378 176.5 H371 M0 173.5 H3 M378 173.5 H375 M0 171.5 H3 M378 171.5 H375 M0 169.5 H3 M378 169.5 H375 M0 167.5 H3 M378 167.5 H375 M0 165.5 H3 M378 165.5 H375 M0 162.5 H3 M378 162.5 H375 M0 160.5 H3 M378 160.5 H375 M0 158.5 H3 M378 158.5 H375 M0 156.5 H3 M378 156.5 H375 M0 153.5 H7 M378 153.5 H371 M0 151.5 H3 M378 151.5 H375 M0 149.5 H3 M378 149.5 H375 M0 147.5 H3 M378 147.5 H375 M0 144.5 H3 M378 144.5 H375 M0 142.5 H3 M378 142.5 H375 M0 140.5 H3 M378 140.5 H375 M0 138.5 H3 M378 138.5 H375 M0 135.5 H3 M378 135.5 H375 M0 133.5 H3 M378 133.5 H375 M0 131.5 H7 M378 131.5 H371 M0 129.5 H3 M378 129.5 H375 M0 127.5 H3 M378 127.5 H375 M0 124.5 H3 M378 124.5 H375 M0 122.5 H3 M378 122.5 H375 M0 120.5 H3 M378 120.5 H375 M0 118.5 H3 M378 118.5 H375 M0 115.5 H3 M378 115.5 H375 M0 113.5 H3 M378 113.5 H375 M0 111.5 H3 M378 111.5 H375 M0 109.5 H7 M378 109.5 H371 M0 106.5 H3 M378 106.5 H375 M0 104.5 H3 M378 104.5 H375 M0 102.5 H3 M378 102.5 H375 M0 100.5 H3 M378 100.5 H375 M0 97.5 H3 M378 97.5 H375 M0 95.5 H3 M378 95.5 H375 M0 93.5 H3 M378 93.5 H375 M0 91.5 H3 M378 91.5 H375 M0 89.5 H3 M378 89.5 H375 M0 86.5 H7 M378 86.5 H371 M0 84.5 H3 M378 84.5 H375 M0 82.5 H3 M378 82.5 H375 M0 80.5 H3 M378 80.5 H375 M0 77.5 H3 M378 77.5 H375 M0 75.5 H3 M378 75.5 H375 M0 73.5 H3 M378 73.5 H375 M0 71.5 H3 M378 71.5 H375 M0 68.5 H3 M378 68.5 H375 M0 66.5 H3 M378 66.5 H375 M0 64.5 H7 M378 64.5 H371 M0 62.5 H3 M378 62.5 H375 M0 59.5 H3 M378 59.5 H375 M0 57.5 H3 M378 57.5 H375 M0 55.5 H3 M378 55.5 H375 M0 53.5 H3 M378 53.5 H375 M0 51.5 H3 M378 51.5 H375 M0 48.5 H3 M378 48.5 H375 M0 46.5 H3 M378 46.5 H375 M0 44.5 H3 M378 44.5 H375 M0 42.5 H7 M378 42.5 H371 M0 39.5 H3 M378 39.5 H375 M0 37.5 H3 M378 37.5 H375 M0 35.5 H3 M378 35.5 H375 M0 33.5 H3 M378 33.5 H375 M0 30.5 H3 M378 30.5 H375 M0 28.5 H3 M378 28.5 H375 M0 26.5 H3 M378 26.5 H375 M0.5 26 V237 M377.5 26 V237" stroke="#cfcfcf" stroke-width="1" fill="none"/><g font-family="Liberation Sans" font-size="10" font-weight="bold" fill="#cfcfcf"><text x="54.9" y="19" text-anchor="middle">-300</text><text x="54.9" y="252" text-anchor="middle">-300</text><text x="99.6" y="19" text-anchor="middle">-200</text><text x="99.6" y="252" text-anchor="middle">-200</text><text x="144.3" y="19" text-anchor="middle">-100</text><text x="144.3" y="252" text-anchor="middle">-100</text><text x="189.0" y="19" text-anchor="middle">0</text><text x="189.0" y="252" text-anchor="middle">0</text><text x="233.7" y="19" text-anchor="middle">100</text><text x="233.7" y="252" text-anchor="middle">100</text><text x="278.4" y="19" text-anchor="middle">200</text><text x="278.4" y="252" text-anchor="middle">200</text><text x="323.1" y="19" text-anchor="middle">300</text><text x="323.1" y="252" text-anchor="middle">300</text><text x="12" y="45.6">200</text><text x="367" y="45.6" text-anchor="end">200</text><text x="12" y="67.9">150</text><text x="367" y="67.9" text-anchor="end">150</text><text x="12" y="90.3">100</text><text x="367" y="90.3" text-anchor="end">100</text><text x="12" y="112.7">50</text><text x="367" y="112.7" text-anchor="end">50</text><text x="12" y="135.0">0</text><text x="367" y="135.0" text-anchor="end">0</text><text x="12" y="157.4">-50</text><text x="367" y="157.4" text-anchor="end">-50</text><text x="12" y="179.7">-100</text><text x="367" y="179.7" text-anchor="end">-100</text><text x="12" y="202.1">-150</text><text x="367" y="202.1" text-anchor="end">-150</text><text x="12" y="224.4">-200</text><text x="367" y="224.4" text-anchor="end">-200</text></g></svg>
<svg class="a" style="left:316px;top:432px" width="378" height="263"><path d="M40.5 0 V3 M40.5 263 V260 M44.5 0 V3 M44.5 263 V260 M48.5 0 V3 M48.5 263 V260 M52.5 0 V3 M52.5 263 V260 M56.5 0 V3 M56.5 263 V260 M60.5 0 V3 M60.5 263 V260 M64.5 0 V3 M64.5 263 V260 M68.5 0 V7 M68.5 263 V256 M72.5 0 V3 M72.5 263 V260 M76.5 0 V3 M76.5 263 V260 M80.5 0 V3 M80.5 263 V260 M84.5 0 V3 M84.5 263 V260 M88.5 0 V3 M88.5 263 V260 M92.5 0 V3 M92.5 263 V260 M96.5 0 V3 M96.5 263 V260 M100.5 0 V3 M100.5 263 V260 M104.5 0 V3 M104.5 263 V260 M108.5 0 V7 M108.5 263 V256 M112.5 0 V3 M112.5 263 V260 M116.5 0 V3 M116.5 263 V260 M120.5 0 V3 M120.5 263 V260 M124.5 0 V3 M124.5 263 V260 M128.5 0 V3 M128.5 263 V260 M132.5 0 V3 M132.5 263 V260 M136.5 0 V3 M136.5 263 V260 M140.5 0 V3 M140.5 263 V260 M144.5 0 V3 M144.5 263 V260 M148.5 0 V7 M148.5 263 V256 M152.5 0 V3 M152.5 263 V260 M156.5 0 V3 M156.5 263 V260 M160.5 0 V3 M160.5 263 V260 M164.5 0 V3 M164.5 263 V260 M168.5 0 V3 M168.5 263 V260 M172.5 0 V3 M172.5 263 V260 M176.5 0 V3 M176.5 263 V260 M180.5 0 V3 M180.5 263 V260 M184.5 0 V3 M184.5 263 V260 M188.5 0 V7 M188.5 263 V256 M192.5 0 V3 M192.5 263 V260 M196.5 0 V3 M196.5 263 V260 M200.5 0 V3 M200.5 263 V260 M204.5 0 V3 M204.5 263 V260 M208.5 0 V3 M208.5 263 V260 M212.5 0 V3 M212.5 263 V260 M216.5 0 V3 M216.5 263 V260 M220.5 0 V3 M220.5 263 V260 M224.5 0 V3 M224.5 263 V260 M228.5 0 V7 M228.5 263 V256 M232.5 0 V3 M232.5 263 V260 M236.5 0 V3 M236.5 263 V260 M240.5 0 V3 M240.5 263 V260 M244.5 0 V3 M244.5 263 V260 M248.5 0 V3 M248.5 263 V260 M252.5 0 V3 M252.5 263 V260 M256.5 0 V3 M256.5 263 V260 M260.5 0 V3 M260.5 263 V260 M264.5 0 V3 M264.5 263 V260 M268.5 0 V7 M268.5 263 V256 M272.5 0 V3 M272.5 263 V260 M276.5 0 V3 M276.5 263 V260 M280.5 0 V3 M280.5 263 V260 M284.5 0 V3 M284.5 263 V260 M288.5 0 V3 M288.5 263 V260 M292.5 0 V3 M292.5 263 V260 M296.5 0 V3 M296.5 263 V260 M300.5 0 V3 M300.5 263 V260 M304.5 0 V3 M304.5 263 V260 M308.5 0 V7 M308.5 263 V256 M312.5 0 V3 M312.5 263 V260 M316.5 0 V3 M316.5 263 V260 M320.5 0 V3 M320.5 263 V260 M324.5 0 V3 M324.5 263 V260 M328.5 0 V3 M328.5 263 V260 M332.5 0 V3 M332.5 263 V260 M336.5 0 V3 M336.5 263 V260 M0 235.5 H3 M378 235.5 H375 M0 231.5 H3 M378 231.5 H375 M0 227.5 H3 M378 227.5 H375 M0 223.5 H3 M378 223.5 H375 M0 219.5 H3 M378 219.5 H375 M0 215.5 H3 M378 215.5 H375 M0 211.5 H7 M378 211.5 H371 M0 207.5 H3 M378 207.5 H375 M0 203.5 H3 M378 203.5 H375 M0 199.5 H3 M378 199.5 H375 M0 195.5 H3 M378 195.5 H375 M0 191.5 H3 M378 191.5 H375 M0 187.5 H3 M378 187.5 H375 M0 183.5 H3 M378 183.5 H375 M0 179.5 H3 M378 179.5 H375 M0 175.5 H3 M378 175.5 H375 M0 171.5 H7 M378 171.5 H371 M0 167.5 H3 M378 167.5 H375 M0 163.5 H3 M378 163.5 H375 M0 159.5 H3 M378 159.5 H375 M0 155.5 H3 M378 155.5 H375 M0 151.5 H3 M378 151.5 H375 M0 147.5 H3 M378 147.5 H375 M0 143.5 H3 M378 143.5 H375 M0 139.5 H3 M378 139.5 H375 M0 135.5 H3 M378 135.5 H375 M0 131.5 H7 M378 131.5 H371 M0 127.5 H3 M378 127.5 H375 M0 123.5 H3 M378 123.5 H375 M0 119.5 H3 M378 119.5 H375 M0 115.5 H3 M378 115.5 H375 M0 111.5 H3 M378 111.5 H375 M0 107.5 H3 M378 107.5 H375 M0 103.5 H3 M378 103.5 H375 M0 99.5 H3 M378 99.5 H375 M0 95.5 H3 M378 95.5 H375 M0 91.5 H7 M378 91.5 H371 M0 87.5 H3 M378 87.5 H375 M0 83.5 H3 M378 83.5 H375 M0 79.5 H3 M378 79.5 H375 M0 75.5 H3 M378 75.5 H375 M0 71.5 H3 M378 71.5 H375 M0 67.5 H3 M378 67.5 H375 M0 63.5 H3 M378 63.5 H375 M0 59.5 H3 M378 59.5 H375 M0 55.5 H3 M378 55.5 H375 M0 51.5 H7 M378 51.5 H371 M0 47.5 H3 M378 47.5 H375 M0 43.5 H3 M378 43.5 H375 M0 39.5 H3 M378 39.5 H375 M0 35.5 H3 M378 35.5 H375 M0 31.5 H3 M378 31.5 H375 M0 27.5 H3 M378 27.5 H375 M0.5 25 V238 M377.5 25 V238" stroke="#cfcfcf" stroke-width="1" fill="none"/><g font-family="Liberation Sans" font-size="10" font-weight="bold" fill="#cfcfcf"><text x="68.5" y="19" text-anchor="middle">-300</text><text x="68.5" y="252" text-anchor="middle">-300</text><text x="108.5" y="19" text-anchor="middle">-200</text><text x="108.5" y="252" text-anchor="middle">-200</text><text x="148.5" y="19" text-anchor="middle">-100</text><text x="148.5" y="252" text-anchor="middle">-100</text><text x="188.5" y="19" text-anchor="middle">0</text><text x="188.5" y="252" text-anchor="middle">0</text><text x="228.5" y="19" text-anchor="middle">100</text><text x="228.5" y="252" text-anchor="middle">100</text><text x="268.5" y="19" text-anchor="middle">200</text><text x="268.5" y="252" text-anchor="middle">200</text><text x="308.5" y="19" text-anchor="middle">300</text><text x="308.5" y="252" text-anchor="middle">300</text><text x="12" y="55.3">200</text><text x="367" y="55.3" text-anchor="end">200</text><text x="12" y="95.3">100</text><text x="367" y="95.3" text-anchor="end">100</text><text x="12" y="135.3">0</text><text x="367" y="135.3" text-anchor="end">0</text><text x="12" y="175.3">-100</text><text x="367" y="175.3" text-anchor="end">-100</text><text x="12" y="215.3">-200</text><text x="367" y="215.3" text-anchor="end">-200</text></g></svg>
<svg class="a" style="left:0;top:0" width="1136" height="902"><g><circle cx="505" cy="270" r="58.5" fill="none" stroke="#ff0000" stroke-width="1.4" stroke-dasharray="3 7 2 9 1 6 2 11"/><circle cx="505" cy="270" r="58.5" fill="none" stroke="#0000ff" stroke-width="1.4" stroke-dasharray="2 13 1 8 3 17" stroke-dashoffset="6"/><path d="M457.4 303.1 Q478 322 505.5 327.4" stroke="#0000ff" stroke-width="1.4" fill="none"/><path d="M534 218 Q552 228 560 244" stroke="#0000ff" stroke-width="2.5" fill="none"/><path d="M560 244 Q566 255 564 275" stroke="#0000ff" stroke-width="1.5" fill="none" stroke-dasharray="4 3"/><polygon points="505.0,270.0 524.5,220.0 542.3,231.6" fill="#6b6500" stroke="#ff0000" stroke-width="1"/><polygon points="505.0,270.0 479.4,288.5 501.0,301.1" fill="#6b6500" stroke="#ff0000" stroke-width="1"/><polygon points="550.2,228.5 570.2,215.1 577.7,226.0 562.7,236.8 563.5,241.8 558.5,244.3 554.3,239.3" fill="#0000ff"/><polygon points="571.0,214.2 573.6,212.2 578.2,217.6 588.6,211.3 592.8,216.8 592.0,218.8 578.6,226.4 577.7,226.0" fill="#ff0000"/><polygon points="561.9,236.4 571.0,231.0 574.8,236.4 564.4,241.8" fill="#ff0000"/><polygon points="535.1,217.6 537.6,217.2 540.1,220.1 538.4,220.9" fill="#ff0000"/><polygon points="543.0,222.0 546.0,220.0 548.0,224.0 545.0,226.0" fill="#ff0000"/><polygon points="549.0,225.0 552.0,223.0 555.0,227.0 552.0,229.0" fill="#ff0000"/><polygon points="520.9,205.0 522.1,204.6 538.0,210.5 535.9,216.8 534.3,218.8 519.2,213.0" fill="#0000ff"/><polygon points="524.2,198.4 525.5,193.8 530.5,195.0 531.8,196.3 530.1,202.5 540.1,208.8 538.4,210.5 522.1,204.6 523.4,199.2" fill="#ff0000"/><polygon points="510.0,206.7 521.3,207.6 520.9,212.2 510.0,209.2" fill="#ff0000"/><polygon points="510.0,209.2 520.9,212.2 519.2,213.0 510.0,211.7" fill="#0000ff"/><rect x="435" y="245" width="7" height="7" fill="#ff0000"/><rect x="440" y="247" width="10" height="7" fill="#0000ff"/><rect x="442" y="258" width="2" height="6" fill="#ff0000"/><rect x="444" y="259" width="4" height="5" fill="#0000ff"/><rect x="448" y="256" width="1" height="2" fill="#0000ff"/><rect x="449" y="240" width="3" height="4" fill="#ff0000"/><rect x="452" y="240" width="3" height="5" fill="#0000ff"/><polygon points="456.2,318.5 459.9,314.8 466.0,314.2 471.0,316.6 468.5,321.6 472.2,325.9 468.5,332.0 464.2,328.3 466.6,324.6 462.3,321.6" fill="#ff0000"/><polygon points="459.9,314.8 463.2,311.1 467.9,314.2 463.6,318.5" fill="#0000ff"/><polygon points="468.5,321.0 471.6,317.3 475.3,319.7 472.8,325.3" fill="#0000ff"/><polygon points="479.0,323.4 495.6,325.9 493.1,329.6 487.6,330.2 485.7,341.9 479.0,340.7 482.7,330.2" fill="#0000ff"/><rect x="479" y="340" width="3" height="2" fill="#ff0000"/><rect x="482" y="342" width="3" height="1" fill="#ff0000"/><rect x="489" y="329" width="4" height="2" fill="#ff0000"/><rect x="500" y="328" width="5" height="1" fill="#ff0000"/></g></svg>
<svg class="a" style="left:0;top:0" width="1136" height="902"><g><polygon points="505.0,563.0 560.7,515.4 608.7,515.4 608.7,528.7" fill="#6b6500" stroke="#ff0000" stroke-width="1"/><polygon points="505.0,563.0 401.6,586.2 401.6,598.5" fill="#6b6500" stroke="#ff0000" stroke-width="1"/><path d="M548 510 L566 495" stroke="#0000ff" stroke-width="6"/><path d="M565 496 L578 485" stroke="#ff0000" stroke-width="6"/><polygon points="545.0,512.0 552.0,504.0 558.0,512.0" fill="#0000ff"/><polygon points="553.0,512.0 560.0,504.0 567.0,512.0" fill="#0000ff"/><polygon points="561.0,512.0 566.0,507.0 571.0,512.0" fill="#0000ff"/><polygon points="553.0,505.0 556.0,500.0 560.0,504.0" fill="#ff0000"/><polygon points="562.0,506.0 566.0,503.0 570.0,511.0" fill="#ff0000"/><rect x="534" y="509" width="3" height="2" fill="#0000ff"/><rect x="539" y="509" width="4" height="2" fill="#ff0000"/><rect x="542" y="510" width="3" height="2" fill="#0000ff"/><rect x="477" y="511" width="1.5" height="1" fill="#ff0000"/><rect x="480" y="511" width="1.5" height="1" fill="#ff0000"/><rect x="484" y="511" width="1.5" height="1" fill="#ff0000"/><rect x="514" y="511" width="1.5" height="1" fill="#0000ff"/><rect x="520" y="511" width="1.5" height="1" fill="#ff0000"/><rect x="526" y="511" width="1.5" height="1" fill="#0000ff"/><rect x="531" y="511" width="1.5" height="1" fill="#0000ff"/><rect x="462" y="614" width="1.5" height="1.5" fill="#0000ff"/><rect x="469" y="614" width="1.5" height="1.5" fill="#0000ff"/><rect x="495" y="614" width="1.5" height="1.5" fill="#0000ff"/><rect x="527" y="614" width="1.5" height="1.5" fill="#ff0000"/><rect x="530" y="614" width="1.5" height="1.5" fill="#0000ff"/><rect x="533" y="614" width="1.5" height="1.5" fill="#ff0000"/><rect x="535" y="614" width="8" height="3" fill="#0000ff"/><rect x="546" y="614" width="4" height="2" fill="#ff0000"/><rect x="553" y="614" width="5" height="3" fill="#0000ff"/><rect x="554" y="616" width="4" height="3" fill="#ff0000"/><rect x="560" y="614" width="3" height="2" fill="#ff0000"/><rect x="588" y="614" width="3" height="1.5" fill="#ff0000"/><rect x="597" y="614" width="1.5" height="1.5" fill="#0000ff"/><path d="M397.5 548 V575" stroke="#ff0000" stroke-width="1" stroke-dasharray="2 2 3 4"/><path d="M397.5 552 V560" stroke="#0000ff" stroke-width="1.2"/><path d="M612.5 529 V612" stroke="#ff0000" stroke-width="1" stroke-dasharray="3 3 6 4 2 8"/><path d="M612.5 535 V600" stroke="#0000ff" stroke-width="1" stroke-dasharray="2 14 3 20"/><rect x="612" y="533" width="5" height="4" fill="#0000ff"/><rect x="617" y="532" width="3" height="5" fill="#ff0000"/><rect x="612" y="595" width="4" height="4" fill="#0000ff"/><rect x="616" y="596" width="3" height="3" fill="#ff0000"/><rect x="612" y="591" width="2" height="3" fill="#ff0000"/><rect x="612" y="612" width="6" height="5" fill="#0000ff"/><rect x="614" y="611" width="3" height="2" fill="#0000ff"/></g></svg>
<svg class="a" style="left:0;top:0" width="1136" height="902"><g><path d="M807 229.90 H969 M807 230.02 H969 M807 230.38 H969 M807 230.99 H969 M807 231.82 H969 M807 232.89 H969 M807 234.18 H969 M807 235.69 H969 M807 237.41 H969 M807 239.32 H969 M807 241.41 H969 M807 243.68 H969 M807 246.10 H969 M807 248.67 H969 M807 251.36 H969 M807 254.16 H969 M807 257.06 H969 M807 260.03 H969 M807 263.05 H969 M807 266.12 H969 M807 269.20 H969 M807 272.28 H969 M807 275.35 H969 M807 278.37 H969 M807 281.34 H969 M807 284.24 H969 M807 287.04 H969 M807 289.73 H969 M807 292.30 H969 M807 294.72 H969 M807 296.99 H969 M807 299.08 H969 M807 300.99 H969 M807 302.71 H969 M807 304.22 H969 M807 305.51 H969 M807 306.58 H969 M807 307.41 H969 M807 308.02 H969 M807 308.38 H969 M807 308.50 H969" stroke="#8e8e8e" stroke-width="0.75" fill="none"/><path d="M809.5 229.9 V308.5 M812.5 229.9 V308.5 M815.5 229.9 V308.5 M818.5 229.9 V308.5 M821.5 229.9 V308.5 M824.5 229.9 V308.5 M827.5 229.9 V308.5 M830.5 229.9 V308.5 M833.5 229.9 V308.5 M836.5 229.9 V308.5 M839.5 229.9 V308.5 M842.5 229.9 V308.5 M845.5 229.9 V308.5 M848.5 229.9 V308.5 M851.5 229.9 V308.5 M854.5 229.9 V308.5 M857.5 229.9 V308.5 M860.5 229.9 V308.5 M863.5 229.9 V308.5 M866.5 229.9 V308.5 M869.5 229.9 V308.5 M872.5 229.9 V308.5 M875.5 229.9 V308.5 M878.5 229.9 V308.5 M881.5 229.9 V308.5 M884.5 229.9 V308.5 M887.5 229.9 V308.5 M890.5 229.9 V308.5 M893.5 229.9 V308.5 M896.5 229.9 V308.5 M899.5 229.9 V308.5 M902.5 229.9 V308.5 M905.5 229.9 V308.5 M908.5 229.9 V308.5 M911.5 229.9 V308.5 M914.5 229.9 V308.5 M917.5 229.9 V308.5 M920.5 229.9 V308.5 M923.5 229.9 V308.5 M926.5 229.9 V308.5 M929.5 229.9 V308.5 M932.5 229.9 V308.5 M935.5 229.9 V308.5 M938.5 229.9 V308.5 M941.5 229.9 V308.5 M944.5 229.9 V308.5 M947.5 229.9 V308.5 M950.5 229.9 V308.5 M953.5 229.9 V308.5 M956.5 229.9 V308.5 M959.5 229.9 V308.5 M962.5 229.9 V308.5 M965.5 229.9 V308.5 M968.5 229.9 V308.5" stroke="#5e5e5e" stroke-width="0.55" fill="none"/><ellipse cx="807" cy="269.2" rx="1.0" ry="39.3" fill="none" stroke="#a0a0a0" stroke-width="0.5" opacity="0.7"/><ellipse cx="807" cy="269.2" rx="1.5" ry="39.3" fill="none" stroke="#a0a0a0" stroke-width="0.5" opacity="0.7"/><ellipse cx="807" cy="269.2" rx="2.0" ry="39.3" fill="none" stroke="#a0a0a0" stroke-width="0.5" opacity="0.7"/><ellipse cx="807" cy="269.2" rx="2.5" ry="39.3" fill="none" stroke="#a0a0a0" stroke-width="0.5" opacity="0.7"/><ellipse cx="807" cy="269.2" rx="3.0" ry="39.3" fill="none" stroke="#a0a0a0" stroke-width="0.5" opacity="0.7"/><ellipse cx="807" cy="269.2" rx="3.5" ry="39.3" fill="none" stroke="#a0a0a0" stroke-width="0.5" opacity="0.7"/><ellipse cx="807" cy="269.2" rx="4.0" ry="39.3" fill="none" stroke="#a0a0a0" stroke-width="0.5" opacity="0.7"/><ellipse cx="807" cy="269.2" rx="4.5" ry="39.3" fill="none" stroke="#a0a0a0" stroke-width="0.5" opacity="0.7"/><ellipse cx="807" cy="269.2" rx="5.0" ry="39.3" fill="none" stroke="#a0a0a0" stroke-width="0.5" opacity="0.7"/><ellipse cx="807" cy="269.2" rx="5.5" ry="39.3" fill="none" stroke="#a0a0a0" stroke-width="0.5" opacity="0.7"/><ellipse cx="807" cy="269.2" rx="6.0" ry="39.3" fill="none" stroke="#a0a0a0" stroke-width="0.5" opacity="0.7"/><ellipse cx="807" cy="269.2" rx="6.5" ry="39.3" fill="none" stroke="#a0a0a0" stroke-width="0.5" opacity="0.7"/><ellipse cx="807" cy="269.2" rx="7.0" ry="39.3" fill="none" stroke="#a0a0a0" stroke-width="0.5" opacity="0.7"/><ellipse cx="807" cy="269.2" rx="7.5" ry="39.3" fill="none" stroke="#a0a0a0" stroke-width="0.5" opacity="0.7"/><ellipse cx="969" cy="269.2" rx="1.0" ry="39.3" fill="none" stroke="#a0a0a0" stroke-width="0.5" opacity="0.7"/><ellipse cx="969" cy="269.2" rx="1.5" ry="39.3" fill="none" stroke="#a0a0a0" stroke-width="0.5" opacity="0.7"/><ellipse cx="969" cy="269.2" rx="2.0" ry="39.3" fill="none" stroke="#a0a0a0" stroke-width="0.5" opacity="0.7"/><ellipse cx="969" cy="269.2" rx="2.5" ry="39.3" fill="none" stroke="#a0a0a0" stroke-width="0.5" opacity="0.7"/><ellipse cx="969" cy="269.2" rx="3.0" ry="39.3" fill="none" stroke="#a0a0a0" stroke-width="0.5" opacity="0.7"/><ellipse cx="969" cy="269.2" rx="3.5" ry="39.3" fill="none" stroke="#a0a0a0" stroke-width="0.5" opacity="0.7"/><ellipse cx="969" cy="269.2" rx="4.0" ry="39.3" fill="none" stroke="#a0a0a0" stroke-width="0.5" opacity="0.7"/><ellipse cx="969" cy="269.2" rx="4.5" ry="39.3" fill="none" stroke="#a0a0a0" stroke-width="0.5" opacity="0.7"/><ellipse cx="969" cy="269.2" rx="5.0" ry="39.3" fill="none" stroke="#a0a0a0" stroke-width="0.5" opacity="0.7"/><ellipse cx="969" cy="269.2" rx="5.5" ry="39.3" fill="none" stroke="#a0a0a0" stroke-width="0.5" opacity="0.7"/><ellipse cx="969" cy="269.2" rx="6.0" ry="39.3" fill="none" stroke="#a0a0a0" stroke-width="0.5" opacity="0.7"/><ellipse cx="969" cy="269.2" rx="6.5" ry="39.3" fill="none" stroke="#a0a0a0" stroke-width="0.5" opacity="0.7"/><ellipse cx="969" cy="269.2" rx="7.0" ry="39.3" fill="none" stroke="#a0a0a0" stroke-width="0.5" opacity="0.7"/><ellipse cx="969" cy="269.2" rx="7.5" ry="39.3" fill="none" stroke="#a0a0a0" stroke-width="0.5" opacity="0.7"/><path d="M807 229.9 H969 M807 308.5 H969" stroke="#a8a8a8" stroke-width="1.2"/><polygon points="886.0,268.4 805.8,281.6 807.6,293.0" fill="rgba(215,205,40,0.62)" stroke="rgba(230,220,60,0.9)" stroke-width="1"/><polygon points="886.0,268.4 930.8,237.6 962.5,236.7 962.5,246.4" fill="rgba(215,205,40,0.58)" stroke="rgba(230,220,60,0.9)" stroke-width="1"/><rect x="935" y="237" width="8" height="5" fill="rgba(255,150,60,0.8)"/><rect x="917" y="232" width="14" height="3" fill="#0000ff"/><rect x="912" y="235" width="5" height="2" fill="#ff0000"/><rect x="920" y="237" width="7" height="2" fill="#0000ff"/><rect x="905" y="240" width="4" height="2" fill="#ff0000"/><rect x="916" y="242" width="7" height="2" fill="#ff0000"/><rect x="915" y="245" width="5" height="2" fill="#0000ff"/><rect x="898" y="242" width="9" height="2" fill="#0000ff"/><rect x="892" y="247" width="3" height="2" fill="#0000ff"/><rect x="899" y="248" width="5" height="2" fill="#ff0000"/><rect x="874" y="241" width="5" height="2" fill="#ff0000"/><rect x="870" y="241" width="3" height="2" fill="#0000ff"/><rect x="920" y="251" width="5" height="2" fill="#ff0000"/><rect x="913" y="249" width="4" height="2" fill="#0000ff"/><rect x="905" y="254" width="5" height="2" fill="#ff0000"/><rect x="924" y="259" width="6" height="3" fill="#0000ff"/><rect x="920" y="262" width="5" height="3" fill="#8080ff"/><rect x="922" y="273" width="5" height="3" fill="#8080ff"/><rect x="875" y="255" width="3" height="3" fill="#0000ff"/><rect x="868" y="292" width="3" height="2" fill="#0000ff"/><rect x="857" y="300" width="4" height="2" fill="#0000ff"/><rect x="861" y="301" width="4" height="2" fill="#0000ff"/><rect x="848" y="304" width="5" height="2" fill="#0000ff"/><rect x="908" y="293" width="5" height="3" fill="#0000ff"/><rect x="905" y="297" width="10" height="2" fill="#0000ff"/><rect x="907" y="302" width="6" height="4" fill="#0000ff"/><rect x="913" y="300" width="5" height="4" fill="#ff0000"/><rect x="918" y="302" width="5" height="4" fill="#ff0000"/><rect x="920" y="306" width="4" height="2" fill="#ff0000"/><rect x="904" y="306" width="6" height="2" fill="#0000ff"/><rect x="932" y="306" width="8" height="2" fill="#ff0000"/><rect x="939" y="287" width="6" height="2" fill="#ff0000"/><rect x="975" y="262" width="5" height="3" fill="#0000ff"/><rect x="970" y="261" width="2" height="6" fill="#ff0000"/><rect x="972" y="290" width="5" height="3" fill="#0000ff"/><rect x="968" y="287" width="2" height="6" fill="#ff0000"/><rect x="970" y="275" width="2" height="4" fill="#ff0000"/><path d="M970 307 L981 312" stroke="#0000ff" stroke-width="2.2"/><path d="M917 229 H928" stroke="#ff0000" stroke-width="1.2"/></g></svg>
<svg class="a" style="left:0;top:0" width="1136" height="902"><g><path d="M765.3 489.5 V637.3 M772.4 489.5 V637.3 M788.3 489.5 V637.3 M805.2 489.5 V637.3 M820.1 489.5 V637.3 M836.3 489.5 V637.3 M846.0 489.5 V637.3 M855.0 489.5 V637.3 M863.1 489.5 V637.3 M871.2 489.5 V637.3 M879.2 489.5 V637.3 M887.3 489.5 V637.3 M895.4 489.5 V637.3 M903.4 489.5 V637.3 M911.5 489.5 V637.3 M919.6 489.5 V637.3 M928.6 489.5 V637.3 M938.3 489.5 V637.3 M954.5 489.5 V637.3 M969.4 489.5 V637.3 M986.3 489.5 V637.3 M1002.2 489.5 V637.3 M1009.3 489.5 V637.3 M765.3 489.5 H1009.3 M765.3 497.7 H1009.3 M765.3 505.9 H1009.3 M765.3 514.1 H1009.3 M765.3 522.3 H1009.3 M765.3 530.6 H1009.3 M765.3 538.8 H1009.3 M765.3 547.0 H1009.3 M765.3 555.2 H1009.3 M765.3 563.4 H1009.3 M765.3 571.6 H1009.3 M765.3 579.8 H1009.3 M765.3 588.0 H1009.3 M765.3 596.2 H1009.3 M765.3 604.5 H1009.3 M765.3 612.7 H1009.3 M765.3 620.9 H1009.3 M765.3 629.1 H1009.3 M765.3 637.3 H1009.3 M768.6 637.3 V645.3 M780.5 637.3 V641.3 M792.3 637.3 V642.3 M804.2 637.3 V641.3 M816.1 637.3 V642.3 M827.9 637.3 V641.3 M839.8 637.3 V642.3 M851.7 637.3 V641.3 M863.6 637.3 V642.3 M875.4 637.3 V641.3 M887.3 637.3 V645.3 M899.2 637.3 V641.3 M911.0 637.3 V642.3 M922.9 637.3 V641.3 M934.8 637.3 V642.3 M946.6 637.3 V641.3 M958.5 637.3 V642.3 M970.4 637.3 V641.3 M982.3 637.3 V642.3 M994.1 637.3 V641.3 M1006.0 637.3 V645.3 M765.3 634.2 H759.3 M765.3 629.5 H759.3 M765.3 624.8 H759.3 M765.3 620.1 H759.3 M765.3 615.4 H759.3 M765.3 610.7 H753.3 M765.3 606.0 H759.3 M765.3 601.3 H759.3 M765.3 596.6 H759.3 M765.3 591.9 H759.3 M765.3 587.1 H759.3 M765.3 582.4 H759.3 M765.3 577.7 H759.3 M765.3 573.0 H759.3 M765.3 568.3 H759.3 M765.3 563.6 H753.3 M765.3 558.9 H759.3 M765.3 554.2 H759.3 M765.3 549.5 H759.3 M765.3 544.8 H759.3 M765.3 540.1 H759.3 M765.3 535.3 H759.3 M765.3 530.6 H759.3 M765.3 525.9 H759.3 M765.3 521.2 H759.3 M765.3 516.5 H753.3 M765.3 511.8 H759.3 M765.3 507.1 H759.3 M765.3 502.4 H759.3 M765.3 497.7 H759.3 M765.3 493.0 H759.3" stroke="#5a5a5a" stroke-width="1.1" fill="none"/><g font-family="Liberation Sans" font-size="10.5" font-weight="bold" fill="#b8b8b8"><text x="764" y="655.5">-5</text><text x="884.5" y="655.5">0</text><text x="1003" y="655.5">5</text><text x="1007" y="655.5" font-size="9">η</text><text x="742" y="520.5">2</text><text x="742" y="567.5">0</text><text x="739.5" y="614">-2</text></g><text x="741" y="494" font-family="Liberation Sans" font-size="10" fill="#a0a0a0">φ</text><rect x="779.6" y="501.0" width="1.6" height="1.6" fill="#ff0000"/><rect x="795.9" y="501.0" width="1.6" height="1.6" fill="#ff0000"/><rect x="795.9" y="492.8" width="1.6" height="1.6" fill="#ff0000"/><rect x="811.8" y="492.8" width="1.6" height="1.6" fill="#ff0000"/><rect x="827.4" y="492.8" width="1.6" height="1.6" fill="#ff0000"/><rect x="827.4" y="501.0" width="1.6" height="1.6" fill="#ff0000"/><rect x="795.9" y="509.2" width="1.6" height="1.6" fill="#ff0000"/><rect x="827.4" y="517.4" width="1.6" height="1.6" fill="#ff0000"/><rect x="795.9" y="525.7" width="1.6" height="1.6" fill="#ff0000"/><rect x="811.8" y="525.7" width="1.6" height="1.6" fill="#ff0000"/><rect x="795.9" y="533.9" width="1.6" height="1.6" fill="#ff0000"/><rect x="811.8" y="533.9" width="1.6" height="1.6" fill="#ff0000"/><rect x="827.4" y="533.9" width="1.6" height="1.6" fill="#ff0000"/><rect x="795.9" y="542.1" width="1.6" height="1.6" fill="#ff0000"/><rect x="779.6" y="550.3" width="1.6" height="1.6" fill="#ff0000"/><rect x="795.9" y="550.3" width="1.6" height="1.6" fill="#ff0000"/><rect x="811.8" y="550.3" width="1.6" height="1.6" fill="#ff0000"/><rect x="779.6" y="558.5" width="1.6" height="1.6" fill="#ff0000"/><rect x="811.8" y="558.5" width="1.6" height="1.6" fill="#ff0000"/><rect x="779.6" y="566.7" width="1.6" height="1.6" fill="#ff0000"/><rect x="811.8" y="566.7" width="1.6" height="1.6" fill="#ff0000"/><rect x="779.6" y="574.9" width="1.6" height="1.6" fill="#ff0000"/><rect x="795.9" y="574.9" width="1.6" height="1.6" fill="#ff0000"/><rect x="961.2" y="492.8" width="1.6" height="1.6" fill="#ff0000"/><rect x="961.2" y="501.0" width="1.6" height="1.6" fill="#ff0000"/><rect x="961.2" y="509.2" width="1.6" height="1.6" fill="#ff0000"/><rect x="977.1" y="509.2" width="1.6" height="1.6" fill="#ff0000"/><rect x="961.2" y="517.4" width="1.6" height="1.6" fill="#ff0000"/><rect x="993.4" y="517.4" width="1.6" height="1.6" fill="#ff0000"/><rect x="932.7" y="517.4" width="1.6" height="1.6" fill="#ff0000"/><rect x="945.6" y="525.7" width="1.6" height="1.6" fill="#ff0000"/><rect x="977.1" y="525.7" width="1.6" height="1.6" fill="#ff0000"/><rect x="945.6" y="533.9" width="1.6" height="1.6" fill="#ff0000"/><rect x="961.2" y="533.9" width="1.6" height="1.6" fill="#ff0000"/><rect x="961.2" y="542.1" width="1.6" height="1.6" fill="#ff0000"/><rect x="961.2" y="550.3" width="1.6" height="1.6" fill="#ff0000"/><rect x="977.1" y="550.3" width="1.6" height="1.6" fill="#ff0000"/><rect x="977.1" y="558.5" width="1.6" height="1.6" fill="#ff0000"/><rect x="993.4" y="558.5" width="1.6" height="1.6" fill="#ff0000"/><rect x="961.2" y="566.7" width="1.6" height="1.6" fill="#ff0000"/><rect x="993.4" y="566.7" width="1.6" height="1.6" fill="#ff0000"/><rect x="914.8" y="574.9" width="1.6" height="1.6" fill="#ff0000"/><rect x="961.2" y="574.9" width="1.6" height="1.6" fill="#ff0000"/><rect x="977.1" y="574.9" width="1.6" height="1.6" fill="#ff0000"/><rect x="993.4" y="574.9" width="1.6" height="1.6" fill="#ff0000"/><rect x="811.8" y="583.1" width="1.6" height="1.6" fill="#ff0000"/><rect x="961.2" y="583.1" width="1.6" height="1.6" fill="#ff0000"/><rect x="993.4" y="583.1" width="1.6" height="1.6" fill="#ff0000"/><rect x="795.9" y="591.3" width="1.6" height="1.6" fill="#ff0000"/><rect x="811.8" y="591.3" width="1.6" height="1.6" fill="#ff0000"/><rect x="977.1" y="591.3" width="1.6" height="1.6" fill="#ff0000"/><rect x="795.9" y="599.5" width="1.6" height="1.6" fill="#ff0000"/><rect x="932.7" y="599.5" width="1.6" height="1.6" fill="#ff0000"/><rect x="961.2" y="599.5" width="1.6" height="1.6" fill="#ff0000"/><rect x="977.1" y="599.5" width="1.6" height="1.6" fill="#ff0000"/><rect x="811.8" y="607.8" width="1.6" height="1.6" fill="#ff0000"/><rect x="977.1" y="607.8" width="1.6" height="1.6" fill="#ff0000"/><rect x="795.9" y="616.0" width="1.6" height="1.6" fill="#ff0000"/><rect x="811.8" y="616.0" width="1.6" height="1.6" fill="#ff0000"/><rect x="923.3" y="616.0" width="1.6" height="1.6" fill="#ff0000"/><rect x="811.8" y="624.2" width="1.6" height="1.6" fill="#ff0000"/><rect x="993.4" y="624.2" width="1.6" height="1.6" fill="#ff0000"/><rect x="795.9" y="632.4" width="1.6" height="1.6" fill="#ff0000"/><rect x="932.7" y="632.4" width="1.6" height="1.6" fill="#ff0000"/><rect x="961.2" y="632.4" width="1.6" height="1.6" fill="#ff0000"/><rect x="993.4" y="632.4" width="1.6" height="1.6" fill="#ff0000"/><rect x="890.5" y="550.3" width="1.6" height="1.6" fill="#ff0000"/><rect x="906.7" y="492.8" width="1.6" height="1.6" fill="#0000ff"/><rect x="977.1" y="501.0" width="1.6" height="1.6" fill="#0000ff"/><rect x="811.8" y="517.4" width="1.6" height="1.6" fill="#0000ff"/><rect x="906.7" y="517.4" width="1.6" height="1.6" fill="#0000ff"/><rect x="811.8" y="542.1" width="1.6" height="1.6" fill="#0000ff"/><rect x="890.5" y="533.9" width="1.6" height="1.6" fill="#0000ff"/><rect x="882.5" y="550.3" width="1.6" height="1.6" fill="#0000ff"/><rect x="906.7" y="558.5" width="1.6" height="1.6" fill="#0000ff"/><rect x="906.7" y="566.7" width="1.6" height="1.6" fill="#0000ff"/><rect x="874.4" y="574.9" width="1.6" height="1.6" fill="#0000ff"/><rect x="866.3" y="583.1" width="1.6" height="1.6" fill="#0000ff"/><rect x="874.4" y="583.1" width="1.6" height="1.6" fill="#0000ff"/><rect x="882.5" y="591.3" width="1.6" height="1.6" fill="#0000ff"/><rect x="898.6" y="591.3" width="1.6" height="1.6" fill="#0000ff"/><rect x="906.7" y="591.3" width="1.6" height="1.6" fill="#0000ff"/><rect x="906.7" y="599.5" width="1.6" height="1.6" fill="#0000ff"/><rect x="914.8" y="599.5" width="1.6" height="1.6" fill="#0000ff"/><rect x="977.1" y="616.0" width="1.6" height="1.6" fill="#0000ff"/><rect x="993.4" y="616.0" width="1.6" height="1.6" fill="#0000ff"/><rect x="866.3" y="616.0" width="1.6" height="1.6" fill="#0000ff"/><rect x="906.7" y="624.2" width="1.6" height="1.6" fill="#0000ff"/><rect x="932.7" y="624.2" width="1.6" height="1.6" fill="#0000ff"/><rect x="811.8" y="632.4" width="1.6" height="1.6" fill="#0000ff"/><rect x="945.6" y="632.4" width="1.6" height="1.6" fill="#0000ff"/><rect x="811.8" y="509.2" width="1.6" height="1.6" fill="#0000ff"/><rect x="930.5" y="490.6" width="6" height="6" fill="#0000ff"/><rect x="945.2" y="492.6" width="2.5" height="2" fill="#ff0000"/><rect x="932.5" y="500.8" width="2" height="2" fill="#0000ff"/><rect x="944.7" y="500.3" width="3.5" height="3" fill="#ff0000"/><rect x="905.5" y="524.5" width="4" height="4" fill="#ff0000"/><rect x="897.9" y="533.2" width="3" height="3" fill="#ff0000"/><rect x="904.0" y="531.2" width="7" height="7" fill="#0000ff"/><rect x="890.3" y="541.9" width="2" height="2" fill="#0000ff"/><rect x="897.9" y="540.9" width="3" height="4" fill="#ff0000"/><rect x="905.0" y="540.4" width="5" height="5" fill="#0000ff"/><rect x="897.4" y="549.1" width="4" height="4" fill="#0000ff"/><rect x="903.0" y="547.1" width="9" height="8" fill="#0000ff"/><rect x="897.9" y="557.8" width="3" height="3" fill="#0000ff"/><rect x="873.7" y="541.4" width="3" height="3" fill="#ff0000"/><rect x="811.6" y="500.3" width="2" height="3" fill="#ff0000"/><rect x="976.9" y="566.0" width="2" height="3" fill="#ff0000"/><rect x="976.9" y="582.9" width="2" height="2" fill="#ff0000"/><rect x="897.4" y="606.6" width="4" height="4" fill="#0000ff"/><rect x="906.0" y="606.6" width="3" height="4" fill="#ff0000"/><rect x="914.6" y="607.6" width="2" height="2" fill="#0000ff"/><rect x="921.1" y="605.6" width="6" height="6" fill="#0000ff"/><rect x="932.5" y="607.6" width="2" height="2" fill="#ff0000"/><rect x="898.4" y="615.8" width="2" height="2" fill="#0000ff"/><rect x="905.0" y="614.3" width="5" height="5" fill="#ff0000"/><rect x="930.5" y="613.8" width="6" height="6" fill="#0000ff"/><rect x="961.0" y="615.8" width="2" height="2" fill="#ff0000"/><rect x="923.1" y="632.2" width="2" height="2" fill="#ff0000"/><rect x="898.4" y="599.3" width="2" height="2" fill="#0000ff"/><rect x="1019.5" y="439.5" width="52" height="85" fill="#141414" stroke="#505050"/><rect x="1036" y="455" width="1.2" height="1.2" fill="#c8c8c8"/><rect x="1034" y="480" width="5" height="4" fill="#c8c8c8"/><rect x="1032" y="504" width="9" height="9" fill="#c8c8c8"/><g font-family="Liberation Sans" font-size="12" fill="#a8a8a8"><text x="1049" y="459.5">1</text><text x="1049" y="485.5">10</text><text x="1049" y="512.5">10</text><text x="1062" y="506" font-size="9">2</text></g></g></svg>
</body></html>
